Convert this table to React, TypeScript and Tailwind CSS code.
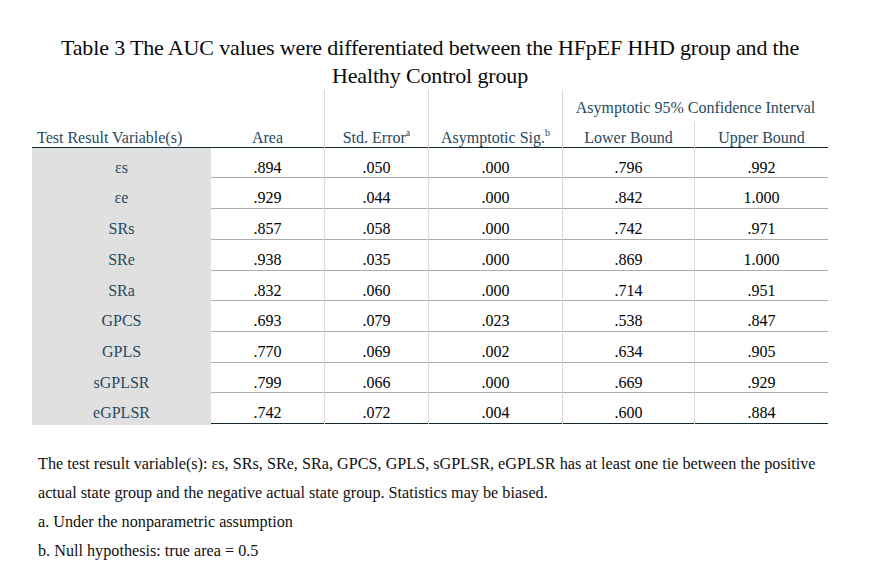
import React from "react";

const rows = [
  ["εs", ".894", ".050", ".000", ".796", ".992"],
  ["εe", ".929", ".044", ".000", ".842", "1.000"],
  ["SRs", ".857", ".058", ".000", ".742", ".971"],
  ["SRe", ".938", ".035", ".000", ".869", "1.000"],
  ["SRa", ".832", ".060", ".000", ".714", ".951"],
  ["GPCS", ".693", ".079", ".023", ".538", ".847"],
  ["GPLS", ".770", ".069", ".002", ".634", ".905"],
  ["sGPLSR", ".799", ".066", ".000", ".669", ".929"],
  ["eGPLSR", ".742", ".072", ".004", ".600", ".884"],
];

// row heights picked so the rules land where the SPSS export has them
const heights = ["h-[30px]", "h-[31px]", "h-[31px]", "h-[31px]", "h-[30px]", "h-[31px]", "h-[31px]", "h-[30px]", "h-[31px]"];

const cols = "grid grid-cols-[179px_114px_104px_134px_132px_133px]";

export default function App() {
  return (
    <div className="w-[879px] h-[586px] overflow-hidden bg-white font-['Liberation_Serif','Times_New_Roman',serif] text-black">
      <div className="ml-[32px] w-[796px]">
        <h1 className="pt-[34px] text-center text-[22px] leading-[28px] tracking-[-0.15px] text-[#0a0a0a]">
          Table 3 The AUC values were differentiated between the HFpEF HHD group and the
          <br />
          Healthy Control group
        </h1>

        <div className="text-[16px] text-[#264a60]">
          <div className={`${cols} h-[32px]`}>
            <div />
            <div className="border-r border-[#dadada]" />
            <div className="border-r border-[#dadada]" />
            <div className="border-r border-[#dadada]" />
            <div className="col-span-2 flex items-end justify-center pb-[5px] leading-[18px]">
              Asymptotic 95% Confidence Interval
            </div>
          </div>
          <div className={`${cols} h-[26px] border-b border-[#152935]`}>
            <div className="flex items-center pl-[5px] pt-[4px]">Test Result Variable(s)</div>
            <div className="flex items-center justify-center border-r border-[#dadada] pt-[4px]">Area</div>
            <div className="flex items-center justify-center border-r border-[#dadada] pt-[4px]">
              Std. Error<sup className="text-[10px]">a</sup>
            </div>
            <div className="flex items-center justify-center border-r border-[#dadada] pt-[4px]">
              Asymptotic Sig.<sup className="text-[10px]">b</sup>
            </div>
            <div className="flex items-center justify-center border-r border-[#dadada] pt-[4px]">Lower Bound</div>
            <div className="flex items-center justify-center pt-[4px]">Upper Bound</div>
          </div>

          {rows.map((r, i) => (
            <div
              key={r[0]}
              className={`${cols} ${heights[i]} ${
                i === rows.length - 1 ? "border-b border-[#152935]" : "border-b border-[#ababab]"
              }`}
            >
              <div className="flex items-center justify-center bg-[#e0e0e0] pt-[8px]">{r[0]}</div>
              {r.slice(1).map((v, j) => (
                <div
                  key={j}
                  className={`flex items-center justify-center pt-[8px] text-[#010205] ${
                    j < 4 ? "border-r border-[#dadada]" : ""
                  }`}
                >
                  {v}
                </div>
              ))}
            </div>
          ))}
        </div>
      </div>

      <div className="ml-[38px] mt-[26px] text-[16.2px] leading-[29px] text-[#111]">
        <p>
          The test result variable(s): εs, SRs, SRe, SRa, GPCS, GPLS, sGPLSR, eGPLSR has at least one tie between the positive
          <br />
          actual state group and the negative actual state group. Statistics may be biased.
        </p>
        <p>a. Under the nonparametric assumption</p>
        <p>b. Null hypothesis: true area = 0.5</p>
      </div>
    </div>
  );
}
